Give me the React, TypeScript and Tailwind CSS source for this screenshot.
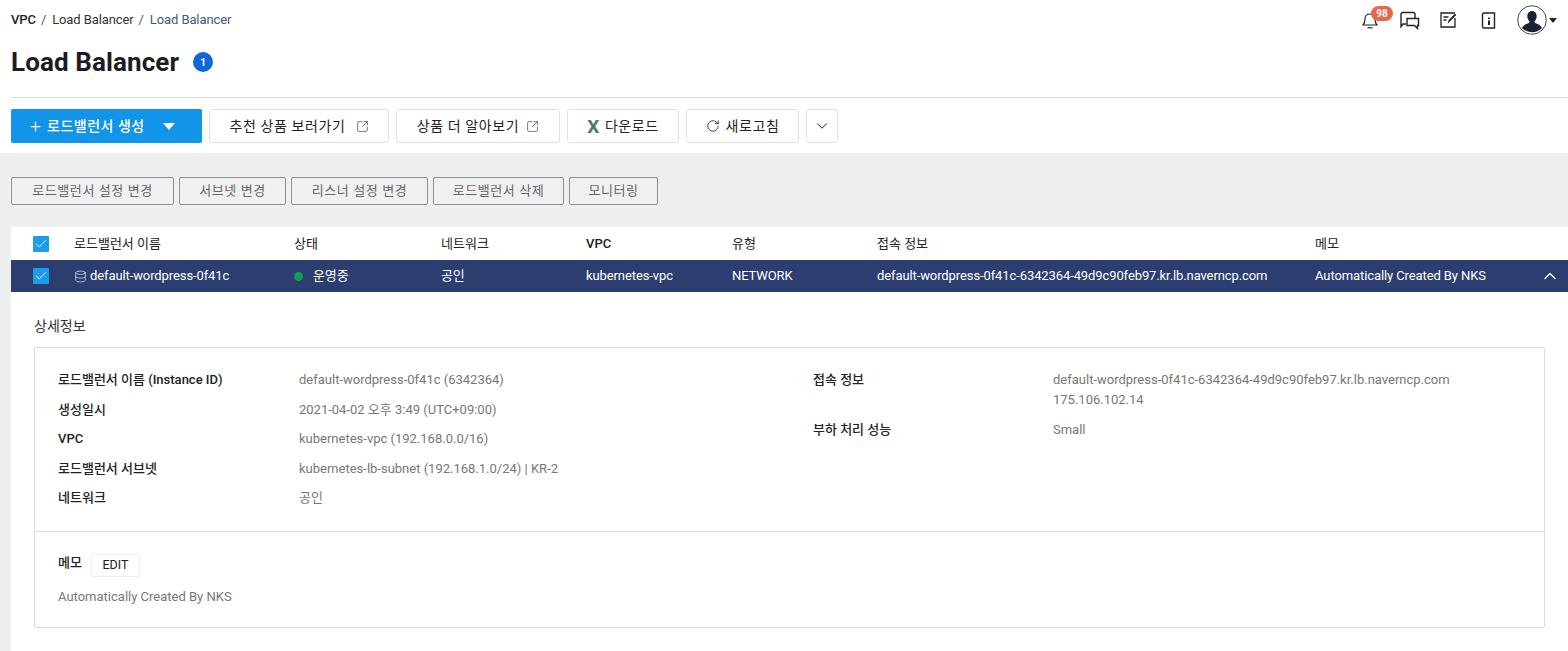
import React from "react";
import { ChevronDown, ChevronUp, Database, Check, Plus, RotateCw, SquareArrowOutUpRight } from "lucide-react";

const font = "font-['Roboto','Noto_Sans_CJK_KR',sans-serif]";

const columns = [
  { label: "로드밸런서 이름", w: "w-[220px]" },
  { label: "상태", w: "w-[147px]" },
  { label: "네트워크", w: "w-[145px]" },
  { label: "VPC", w: "w-[146px]" },
  { label: "유형", w: "w-[145px]" },
  { label: "접속 정보", w: "w-[438px]" },
  { label: "메모", w: "w-[226px]" },
];

const leftInfo = [
  ["로드밸런서 이름 (Instance ID)", "default-wordpress-0f41c (6342364)"],
  ["생성일시", "2021-04-02 오후 3:49 (UTC+09:00)"],
  ["VPC", "kubernetes-vpc (192.168.0.0/16)"],
  ["로드밸런서 서브넷", "kubernetes-lb-subnet (192.168.1.0/24) | KR-2"],
  ["네트워크", "공인"],
];

const actions = [
  { label: "로드밸런서 설정 변경", w: "w-[163px]" },
  { label: "서브넷 변경", w: "w-[107px]" },
  { label: "리스너 설정 변경", w: "w-[137px]" },
  { label: "로드밸런서 삭제", w: "w-[131px]" },
  { label: "모니터링", w: "w-[89px]" },
];

const ToolButton = ({ w, children }: { w: string; children: React.ReactNode }) => (
  <button className={`${w} h-[34px] flex items-center justify-center bg-white border border-[#e2e2e2] rounded-[3px] text-[14px] tracking-[0.6px] text-[#222]`}>
    {children}
  </button>
);

const CheckBox = () => (
  <span className="w-4 h-4 flex items-center justify-center bg-[#1e9bea] rounded-[1px]">
    <Check size={14} strokeWidth={1.5} className="text-white" />
  </span>
);

const Bell = () => (
  <svg width="16" height="18" viewBox="0 0 16 18" fill="none" stroke="#222" strokeWidth="1.2">
    <path d="M1 14h14c-1.500-1.500-2-3-2-6 0-3-2-5-5-5s-5 2-5 5c0 3-.5 4.500-2 6z" />
    <path d="M5.500 16.800h5" />
  </svg>
);

const Chat = () => (
  <svg width="20" height="19" viewBox="0 0 20 19" fill="none" stroke="#222" strokeWidth="1.4">
    <path d="M6 13H3l-2 2.500V3.500A2 2 0 0 1 3 1.500h10a2 2 0 0 1 2 2V7" />
    <path d="M7 7.500h11.500v7h-1v3l-3-3H7z" />
  </svg>
);

const Note = () => (
  <svg width="17" height="16" viewBox="0 0 17 16" fill="none" stroke="#222" strokeWidth="1.3">
    <path d="M15 1H1v14h14V6" />
    <path d="M3.500 5h5M3.500 8h3" />
    <path d="M8 11l1-3 6-6 1 1-6 6z" fill="#222" strokeWidth="0.6" />
  </svg>
);

const Book = () => (
  <svg width="15" height="17" viewBox="0 0 15 17" fill="none" stroke="#222" strokeWidth="1.4">
    <path d="M3 1h10.500v15H3a1.500 1.500 0 0 1-1.500-1.500v-12A1.500 1.500 0 0 1 3 1z" />
    <path d="M8 5.500v1.800M8 8.500v4.500" strokeWidth="2" />
  </svg>
);

const Avatar = () => (
  <svg width="30" height="30" viewBox="0 0 30 30">
    <circle cx="15" cy="15" r="14.300" fill="#fff" stroke="#444" strokeWidth="1" />
    <path d="M15 6c3 0 4.700 2.300 4.700 5.200 0 2.200-1 4-2.200 5.200 0 1 .5 1.500 2 2.100 2.500 1 4.500 2 5.500 4.500a14 14 0 0 1-20 0c1-2.500 3-3.500 5.500-4.500 1.500-.6 2-1.100 2-2.100-1.200-1.200-2.200-3-2.200-5.200C10.300 8.300 12 6 15 6z" fill="#1c2233" />
  </svg>
);

const ExcelX = () => (
  <span className="text-[19px] leading-none font-bold text-[#4f7a68] mr-[5px]">X</span>
);

export default function App() {
  return (
    <div className={`${font} w-[1568px] h-[651px] overflow-hidden bg-white text-[#222]`}>
      <header className="h-[153px] pl-[11px] flex flex-col">
        <div className="h-[40px] flex items-center justify-between pr-[11px]">
          <nav className="flex items-center text-[13px] tracking-[-0.1px]">
            <span className="font-medium text-[#222]">VPC</span>
            <span className="ml-[5px] text-[#555]">/</span>
            <span className="ml-[6px] text-[#333]">Load Balancer</span>
            <span className="ml-[5px] text-[#555]">/</span>
            <span className="ml-[6px] text-[#3d5a80]">Load Balancer</span>
          </nav>
          <div className="flex items-center">
            <span className="relative flex">
              <Bell />
              <span className="absolute -top-[5px] left-[9px] w-[22px] h-[15px] rounded-full bg-[#e8674a] text-white text-[10px] font-bold flex items-center justify-center">98</span>
            </span>
            <span className="ml-[22px] flex"><Chat /></span>
            <span className="ml-[20px] flex"><Note /></span>
            <span className="ml-[24px] flex"><Book /></span>
            <span className="ml-[21px] flex"><Avatar /></span>
            <span className="ml-[2px] w-0 h-0 border-x-[4px] border-x-transparent border-t-[5px] border-t-[#222]" />
          </div>
        </div>
        <div className="h-[44px] flex items-center">
          <h1 className="text-[26px] font-bold text-[#1c1c22] tracking-[0.1px]">Load Balancer</h1>
          <span className="ml-[14px] w-5 h-5 rounded-full bg-[#1268d3] text-white text-[10px] font-bold flex items-center justify-center">1</span>
        </div>
        <div className="mt-[13px] h-px bg-[#dcdcdc]" />
        <div className="mt-[11px] flex items-center gap-[7px]">
          <button className="w-[191px] h-[34px] flex items-center bg-[#1295e8] rounded-[2px] text-white text-[14px] font-medium tracking-[0.5px]">
            <Plus size={15} strokeWidth={2} className="ml-[17px] mr-[4px]" />
            <span>로드밸런서 생성</span>
            <span className="ml-[18px] w-0 h-0 border-x-[6px] border-x-transparent border-t-[7px] border-t-white" />
          </button>
          <ToolButton w="w-[180px]">
            추천 상품 보러가기
            <SquareArrowOutUpRight size={13} strokeWidth={1.3} className="ml-[10px] text-[#444]" />
          </ToolButton>
          <ToolButton w="w-[164px]">
            상품 더 알아보기
            <SquareArrowOutUpRight size={13} strokeWidth={1.3} className="ml-[7px] text-[#444]" />
          </ToolButton>
          <ToolButton w="w-[112px]">
            <ExcelX />
            다운로드
          </ToolButton>
          <ToolButton w="w-[113px]">
            <RotateCw size={14} strokeWidth={1.5} className="mr-[6px] text-[#333]" />
            새로고침
          </ToolButton>
          <ToolButton w="w-[32px]">
            <ChevronDown size={18} strokeWidth={1.3} />
          </ToolButton>
        </div>
      </header>

      <main className="h-[498px] bg-[#eeeff0] pl-[11px] flex flex-col">
        <div className="mt-[24px] flex gap-[5px]">
          {actions.map((a) => (
            <button
              key={a.label}
              className={`${a.w} h-[28px] flex items-center justify-center bg-[#f0f0f0] border border-[#8c8f93] rounded-[2px] text-[13px] tracking-[0.6px] text-[#666]`}
            >
              {a.label}
            </button>
          ))}
        </div>

        <section className="mt-[22px] flex-1 bg-white flex flex-col">
          <div className="h-[33px] flex items-center text-[13px] text-[#222]">
            <span className="w-[63px] pl-[22px] flex items-center"><CheckBox /></span>
            {columns.map((c) => (
              <span key={c.label} className={`${c.w} ${c.label === "VPC" ? "font-medium" : ""}`}>{c.label}</span>
            ))}
          </div>
          <div className="h-[32px] flex items-center bg-[#2c3e70] text-[13px] text-white tracking-[-0.1px]">
            <span className="w-[63px] pl-[22px] flex items-center"><CheckBox /></span>
            <span className="w-[220px] flex items-center">
              <Database size={13} strokeWidth={1.4} className="mr-[3px] text-[#dde]" />
              default-wordpress-0f41c
            </span>
            <span className="w-[147px] flex items-center">
              <span className="w-[9px] h-[9px] rounded-full bg-[#0f9d58]" />
              <span className="ml-[10px]">운영중</span>
            </span>
            <span className="w-[145px]">공인</span>
            <span className="w-[146px]">kubernetes-vpc</span>
            <span className="w-[145px]">NETWORK</span>
            <span className="w-[438px]">default-wordpress-0f41c-6342364-49d9c90feb97.kr.lb.naverncp.com</span>
            <span className="w-[226px]">Automatically Created By NKS</span>
            <ChevronUp size={20} strokeWidth={1.6} className="-ml-[1px]" />
          </div>

          <div className="pl-[23px]">
            <h2 className="mt-[26px] text-[14px] leading-[16px] text-[#333]">상세정보</h2>
            <div className="mt-[13px] w-[1511px] h-[281px] border border-[#dcdcdc] rounded-[2px] flex flex-col text-[13px]">
              <div className="h-[183px] flex pt-[17px] pl-[23px]">
                <dl className="w-[755px] flex flex-col">
                  {leftInfo.map(([k, v]) => (
                    <div key={k} className="h-[29.500px] flex items-center">
                      <dt className="w-[241px] font-medium text-[#222]">{k}</dt>
                      <dd className="text-[#777]">{v}</dd>
                    </div>
                  ))}
                </dl>
                <dl className="flex flex-col">
                  <div className="flex">
                    <dt className="w-[240px] font-medium leading-[29.500px] text-[#222]">접속 정보</dt>
                    <dd className="text-[#777] leading-[20px] pt-[5px]">
                      default-wordpress-0f41c-6342364-49d9c90feb97.kr.lb.naverncp.com
                      <br />
                      175.106.102.14
                    </dd>
                  </div>
                  <div className="mt-[5px] h-[29.500px] flex items-center">
                    <dt className="w-[240px] font-medium text-[#222]">부하 처리 성능</dt>
                    <dd className="text-[#777]">Small</dd>
                  </div>
                </dl>
              </div>
              <div className="flex-1 border-t border-[#dcdcdc] pl-[23px] pt-[22px]">
                <div className="flex items-center h-[22px]">
                  <span className="font-medium text-[#222] -mt-[4px]">메모</span>
                  <button className="ml-[9px] w-[49px] h-[23px] border border-[#eeeeee] rounded-[2px] text-[12.500px] text-[#222]">EDIT</button>
                </div>
                <p className="mt-[11px] text-[#777]">Automatically Created By NKS</p>
              </div>
            </div>
          </div>
        </section>
      </main>
    </div>
  );
}
